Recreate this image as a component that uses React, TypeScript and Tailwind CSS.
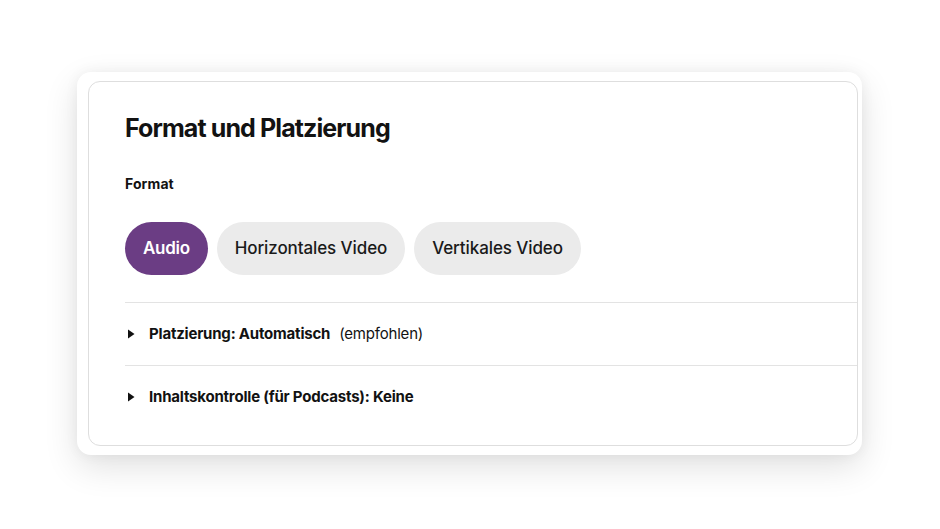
import { useState } from "react";

const formats = ["Audio", "Horizontales Video", "Vertikales Video"];

function Caret() {
  return (
    <svg className="w-[8px] h-[10px] shrink-0" viewBox="0 0 8 10" fill="#111">
      <path d="M1 0.5 L7.5 5 L1 9.5 Z" />
    </svg>
  );
}

export default function App() {
  const [format, setFormat] = useState("Audio");

  return (
    <div
      className="min-h-[529px] bg-white pt-[72px] pl-[77px]"
      style={{ fontFamily: "Inter, 'Liberation Sans', sans-serif" }}
    >
      <div className="w-[785px] rounded-[14px] bg-white pt-[9px] pb-[9px] pl-[11px] pr-[4px] shadow-[0_12px_34px_rgba(0,0,0,0.12),0_0_14px_rgba(0,0,0,0.05)]">
        <div className="rounded-[12px] border border-[#dedede] pl-[36px] pt-[30px] pb-[17px]">
          <h2 className="text-[25px] leading-[32px] font-bold tracking-[-0.9px] text-[#121212]">
            Format und Platzierung
          </h2>

          <p className="mt-[30px] text-[14px] leading-[20px] font-bold tracking-[0.1px] text-[#121212]">
            Format
          </p>

          <div className="mt-[28px] flex gap-[9px]">
            {formats.map((f) => (
              <button
                key={f}
                onClick={() => setFormat(f)}
                className={
                  f === format
                    ? "h-[53px] rounded-full bg-[#6b3d84] px-[18px] text-[17px] font-semibold tracking-[-0.3px] text-white"
                    : "h-[53px] rounded-full bg-[#ebebeb] px-[18px] text-[17px] font-medium tracking-[-0.1px] text-[#1a1a1a]"
                }
              >
                {f}
              </button>
            ))}
          </div>

          <div className="mt-[27px] border-t border-[#e3e3e3]">
            <div className="flex h-[62px] items-center gap-[14px] pl-[2px] text-[15px] text-[#121212]">
              <Caret />
              <span>
                <span className="font-bold tracking-[-0.2px]">Platzierung: Automatisch</span>
                <span className="ml-[9px] tracking-[-0.2px]">(empfohlen)</span>
              </span>
            </div>
          </div>
          <div className="border-t border-[#e3e3e3]">
            <div className="flex h-[62px] items-center gap-[14px] pl-[2px] text-[15px] text-[#121212]">
              <Caret />
              <span className="font-bold tracking-[-0.2px]">
                Inhaltskontrolle (für Podcasts): Keine
              </span>
            </div>
          </div>
        </div>
      </div>
    </div>
  );
}
